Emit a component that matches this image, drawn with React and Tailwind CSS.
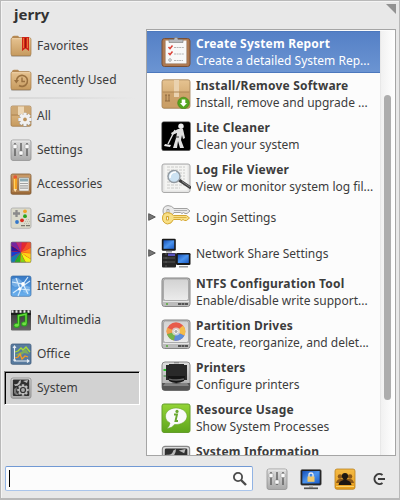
import React from "react";

function Defs() {
  return (
    <svg className="absolute h-0 w-0">
      <defs>
        <linearGradient id="tan" x1="0" y1="0" x2="0" y2="1"><stop offset="0" stopColor="#e6c391" /><stop offset="1" stopColor="#c69a5e" /></linearGradient>
        <linearGradient id="silver" x1="0" y1="0" x2="0" y2="1"><stop offset="0" stopColor="#dedede" /><stop offset="1" stopColor="#a9a9a9" /></linearGradient>
        <linearGradient id="disk" x1="0" y1="0" x2="0" y2="1"><stop offset="0" stopColor="#d2d2d2" /><stop offset="1" stopColor="#ececec" /></linearGradient>
        <linearGradient id="wood" x1="0" y1="0" x2="0" y2="1"><stop offset="0" stopColor="#c99a68" /><stop offset="1" stopColor="#9a6836" /></linearGradient>
        <linearGradient id="sky" x1="0" y1="0" x2="0" y2="1"><stop offset="0" stopColor="#3577c4" /><stop offset="1" stopColor="#6bb2f0" /></linearGradient>
        <linearGradient id="coal" x1="0" y1="0" x2="0" y2="1"><stop offset="0" stopColor="#333" /><stop offset="1" stopColor="#666" /></linearGradient>
        <linearGradient id="lime" x1="0" y1="0" x2="0" y2="1"><stop offset="0" stopColor="#93d436" /><stop offset="1" stopColor="#5fa51c" /></linearGradient>
        <linearGradient id="screen" x1="0" y1="0" x2="1" y2="1"><stop offset="0" stopColor="#1650b8" /><stop offset="0.5" stopColor="#4b94ee" /><stop offset="1" stopColor="#1b5cc8" /></linearGradient>
        <linearGradient id="amber" x1="0" y1="0" x2="0" y2="1"><stop offset="0" stopColor="#f5bb45" /><stop offset="1" stopColor="#e79d1c" /></linearGradient>
      </defs>
    </svg>
  );
}

const Small = ({ children }) => (
  <svg viewBox="0 0 22 22" className="block h-[22px] w-[22px] shrink-0">{children}</svg>
);
const Large = ({ children }) => (
  <svg viewBox="0 0 30 30" className="block h-[30px] w-[30px] shrink-0">{children}</svg>
);

function Folder({ children }) {
  return (
    <Small>
      <path d="M2 3Q2 .8 4 .8H8L9.500 2.500H19V8H2Z" fill="#b78a53" />
      <rect x="1" y="20" width="20" height="1.500" rx=".7" fill="#777" opacity=".7" />
      <rect x="1" y="2.700" width="20" height="18" rx="1.800" fill="url(#tan)" stroke="#a67c48" strokeWidth=".7" />
      <path d="M2 3.700H20" stroke="#f1d8b1" strokeWidth=".8" />
      {children}
    </Small>
  );
}
const Favorites = () => (
  <Folder>
    <path d="M12 2H19V16L15.500 13.500L12 16Z" fill="#cf2418" />
    <path d="M13.500 3V13M17.500 3V13" stroke="#f07a35" strokeWidth=".9" />
    <path d="M15.500 3V13" stroke="#8f1008" strokeWidth=".8" />
  </Folder>
);
const Recent = () => (
  <Folder>
    <path d="M6.500 12A5.500 5.500 0 1 1 9 16.500" fill="none" stroke="#9a7140" strokeWidth="1.600" />
    <path d="M4 11H9L6.300 14.500Z" fill="#9a7140" />
    <path d="M12 8.500V12.500H15" fill="none" stroke="#9a7140" strokeWidth="1.400" />
  </Folder>
);

const gearTeeth = [0, 45, 90, 135, 180, 225, 270, 315];
function Gear({ x, y, r, fill, hole }) {
  return (
    <g transform={`translate(${x} ${y})`}>
      {gearTeeth.map((a) => <rect key={a} x={-r * 0.23} y={-r} width={r * 0.46} height={r} rx=".5" transform={`rotate(${a})`} fill={fill} />)}
      <circle r={r * 0.72} fill={fill} /><circle r={r * 0.28} fill={hole} />
    </g>
  );
}
const All = () => (
  <Small>
    <rect x="1" y="1" width="20" height="20.300" rx="1.500" fill="url(#tan)" stroke="#9c7444" strokeWidth=".7" />
    <path d="M1.500 10H20.500" stroke="#a57b49" />
    <path d="M8 1.500H14V10H8Z" fill="#edd7b5" /><path d="M2 2H8V9H2ZM14 2H20V9H14Z" fill="#cda875" />
    <Gear x="15" y="14.700" r="7" fill="#999" hole="#bd935b" />
    <Gear x="15" y="14.400" r="6.600" fill="#f1f1f1" hole="#bd935b" />
  </Small>
);
const Sliders = () => (
  <Small>
    <rect x="1" y="1" width="20" height="20.500" rx="2" fill="url(#silver)" stroke="#939393" strokeWidth=".8" />
    <path d="M2 2H20" stroke="#f5f5f5" strokeWidth=".7" />
    <path d="M5 4V17M11 4V17M17 4V17" stroke="#555" strokeWidth="1.300" />
    <g fill="#fafafa" stroke="#777" strokeWidth=".4"><rect x="3" y="5.500" width="4" height="4" rx=".7" /><rect x="9" y="12" width="4" height="4" rx=".7" /><rect x="15" y="5.500" width="4" height="4" rx=".7" /></g>
  </Small>
);
const Accessories = () => (
  <Small>
    <rect x="1" y="1" width="20" height="20.300" rx="1.500" fill="url(#wood)" stroke="#805a34" strokeWidth=".8" />
    <path d="M2 4H20M2 18H20" stroke="#d8ad79" strokeWidth=".6" />
    <path d="M3.500 4H7V16L5.200 19L3.500 16Z" fill="#f5a324" /><path d="M3.500 5.500V3Q5.200 1.500 7 3V5.500Z" fill="#e45735" /><path d="M3.500 16L5.200 19L7 16Z" fill="#f8dfb4" /><path d="M4.500 6V16" stroke="#ffd264" />
    <rect x="9" y="4.500" width="10" height="13.500" rx=".8" fill="#f0f0ed" stroke="#80715d" strokeWidth=".5" />
    <rect x="10" y="5.500" width="8" height="3" fill="#8daab2" />
    <path d="M10.500 10.500H18M10.500 12.800H18M10.500 15.100H18" stroke="#555" strokeWidth="1.200" strokeDasharray="1 1" />
  </Small>
);
const Games = () => (
  <Small>
    <rect x="1" y="1" width="20" height="20.300" rx="1.800" fill="#dbdacb" stroke="#aaa" strokeWidth=".8" />
    <path d="M6.500 3V10M3 6.500H10" stroke="#8b8b8b" strokeWidth="2.300" />
    <circle cx="15" cy="4.300" r="1.900" fill="#eea529" /><circle cx="15" cy="9.200" r="1.900" fill="#28a51e" /><circle cx="12" cy="13.300" r="1.900" fill="#db2a1c" /><circle cx="7" cy="15" r="1.900" fill="#3477ca" />
    <path d="M11 18.700H15M16 18.700H20" stroke="#77776f" strokeWidth="1.300" />
    <path d="M15 14.500H20M16 12.500H20M14 16.500H20" stroke="#b5b4a5" strokeDasharray="1 1" strokeWidth=".8" />
  </Small>
);
const Graphics = () => (
  <Small>
    <svg x="1" y="1" width="20" height="20.500" viewBox="-10 -10 20 20" preserveAspectRatio="none">
      <rect x="-10" y="-10" width="20" height="20" fill="#e22" />
      {["#e22832", "#f2512e", "#ff8c18", "#ffd016", "#f4f414", "#83d713", "#23ad24", "#147bb0", "#183dce", "#301394", "#76259f", "#b72a83"].map((c, i) => (
        <path key={c} d="M0 0Q2 -8 0 -17L9.500 -17Q7 -9 0 0Z" transform={`rotate(${i * 30})`} fill={c} />
      ))}
    </svg>
    <rect x="1" y="1" width="20" height="20.300" rx="1.500" fill="none" stroke="#777" strokeWidth=".7" />
  </Small>
);
const Internet = () => (
  <Small>
    <rect x="1" y="1" width="20" height="20.300" rx="1.800" fill="url(#sky)" stroke="#3b6da5" strokeWidth=".7" />
    <path d="M2 4L8 3L12 6L10 11L5 12L2 10ZM14 10L20 12L18 19L13 17Z" fill="#a9d2f6" opacity=".45" />
    <path d="M2 7L13 9L18 2M13 9L8 21M3 18L20 6M13 9L18 19M6 3L10 14L20 15" fill="none" stroke="#e2f3ff" strokeWidth="1.200" opacity=".9" />
    <circle cx="13" cy="9" r="1.900" fill="#fff" /><circle cx="9.500" cy="14" r="1.500" fill="#fff" />
  </Small>
);
const Multimedia = () => (
  <Small>
    <rect x="1" y="1" width="20" height="20.500" rx="1.300" fill="url(#coal)" />
    <path d="M1.500 2.500H21" stroke="#efefef" strokeWidth="2.300" strokeDasharray="2 2" />
    <path d="M1 5H21" stroke="#151515" strokeWidth="1.500" />
    <path d="M8.500 16V6.800L16 5.200V14.500" fill="none" stroke="#168010" strokeWidth="3" /><ellipse cx="6.600" cy="16.400" rx="3.100" ry="2.500" fill="#2ba71e" /><ellipse cx="14.200" cy="15" rx="3.100" ry="2.500" fill="#2ba71e" />
    <path d="M8.500 16V6.800L16 5.200V14.500" fill="none" stroke="#65dc38" strokeWidth="1.500" /><ellipse cx="6.600" cy="16.200" rx="2" ry="1.500" fill="#73df45" /><ellipse cx="14.200" cy="14.800" rx="2" ry="1.500" fill="#73df45" />
  </Small>
);
const Office = () => (
  <Small>
    <rect x="1" y="1" width="20" height="20.300" rx="1.500" fill="#587b9f" stroke="#405c7b" strokeWidth=".8" />
    <path d="M5 9L8 8L11 5L13 7L16 4L20 9" stroke="#a9db35" strokeWidth="1.300" fill="none" />
    <path d="M5 12L9 10L13 8L16 6L19 11L14 10L10 13Z" fill="#8bbd42" opacity=".75" />
    <path d="M5 15L8 14L10 11L12 16L15 13L18 14" stroke="#f69c20" strokeWidth="1.300" fill="none" />
    <path d="M4.500 3V18H19M3 5L4.500 3L6 5M17 16.500L19 18L17 19.500M3 17H6" fill="none" stroke="#e7edf3" strokeWidth="1.100" />
  </Small>
);
const SystemArt = () => (
  <>
    <rect x="1" y="1" width="20" height="20.300" rx="2" fill="url(#silver)" stroke="#888" strokeWidth=".8" />
    <rect x="2.800" y="2.500" width="16.500" height="16.500" rx="1" fill="#303030" />
    <Gear x="13" y="13" r="5.700" fill="#bababa" hole="#303030" /><circle cx="13" cy="13" r="3.100" fill="#303030" /><circle cx="13" cy="13" r="1.900" fill="#aaa" />
    <path d="M4 7Q8 8 9 4L11 3Q11 9 5 9ZM13 4L18 3L17 6Z" fill="#b8b8b8" />
    <path d="M4 12L7 10L6 15L9 18H6L4 16Z" fill="#777" />
  </>
);
const SystemIcon = () => <Small><SystemArt /></Small>;

const Report = () => (
  <Large>
    <rect x="1" y="1.500" width="28" height="28" rx="2.500" fill="#ad7951" stroke="#785038" />
    <rect x="4" y="4" width="22" height="23" fill="#8d6748" />
    <rect x="4.500" y="3.500" width="21" height="23" fill="#f8f8f8" />
    <path d="M8 4V2.500H13Q13 .2 15 .2Q17 .2 17 2.500H22V5.500H8Z" fill="#b7b9bd" stroke="#777" strokeWidth=".6" />
    <path d="M7.500 10L9 11.700L11.500 8.500M7.500 16L9 17.700L11.500 14.500" fill="none" stroke="#da4036" strokeWidth="1.500" />
    <circle cx="9" cy="23" r="1.300" fill="none" stroke="#888" strokeWidth=".7" />
    <path d="M13 10.500H23M13 17H23M13 23.500H22" stroke="#b4b4b4" strokeDasharray="2 .6" />
  </Large>
);
const Install = () => (
  <Large>
    <rect x="1" y=".8" width="28" height="28.500" rx="2" fill="url(#tan)" stroke="#9e7d55" strokeWidth=".8" />
    <path d="M1.500 13H28.500V28H1.500Z" fill="#c99f68" opacity=".75" /><path d="M13 1H18V18H13Z" fill="#ead2af" />
    <path d="M1.500 13H28.500" stroke="#ae8653" />
    <path d="M5 16V22M8 16V22M4 16H6M7 16H9M4 22H9" stroke="#865f37" strokeWidth=".8" />
    <circle cx="22.500" cy="24" r="5.800" fill="#55a51e" stroke="#3e8114" strokeWidth=".6" /><path d="M20.700 20.500H24.300V24H26L22.500 27.700L19 24H20.700Z" fill="#fff" />
  </Large>
);
const Cleaner = () => (
  <Large>
    <rect x=".7" y=".7" width="28.800" height="29" rx="2" fill="#000" stroke="#777" strokeWidth=".6" />
    <circle cx="20" cy="5.200" r="2.700" fill="#eee" />
    <path d="M17 8L22 8L24 17L22 18L21 14L20 19L23 27H19L17 20L16 27H12L15 17L16 12L11 14L10 12Z" fill="#e0e0e0" />
    <path d="M14 9L7 23" stroke="#ddd" strokeWidth="1.400" /><path d="M4 23L10 24L9 26L3 25Z" fill="#eee" />
    <path d="M14 16H18" stroke="#333" />
  </Large>
);
const Log = () => (
  <Large>
    <rect x="1" y="1" width="28" height="28.500" rx="2" fill="#e5e5e4" stroke="#aaa" />
    <rect x="3.500" y="2" width="23" height="25.500" fill="#f4f4f2" />
    <path d="M6 4H24M6 7H24M6 10H24M6 13H24M6 16H24M6 19H22M6 22H24M6 25H19" stroke="#c1c1bf" strokeWidth=".8" strokeDasharray="3 1" />
    <path d="M18 17L30 25" stroke="#3e3e3e" strokeWidth="3" /><path d="M21 18.500L29 24" stroke="#8a8a8a" strokeWidth=".9" />
    <circle cx="13" cy="13.500" r="6" fill="#cce2f2" stroke="#929aa1" strokeWidth="1.400" /><path d="M9 15Q9 9 15 9" fill="none" stroke="#fff" strokeWidth="1.500" />
  </Large>
);
function Key({ fill, stroke, transform }) {
  return (
    <g transform={transform}>
      <path d="M12 3.500H25L28 6L25 8.500H23L21.500 7.500L20 8.500L18.500 7.500H12Q10 12 6 12Q1 11 1 6Q1 1 6 .6Q10 .7 12 3.500ZM5 4.500V8H7V4.500Z" fill={fill} fillRule="evenodd" stroke={stroke} />
      <path d="M12 5.500H25" stroke={stroke} strokeWidth=".8" />
    </g>
  );
}
const Keys = () => (
  <Large>
    <Key fill="#eaeaea" stroke="#a1a1a1" transform="translate(1 3)" />
    <Key fill="#f7df86" stroke="#d5a731" transform="translate(.5 10)" />
  </Large>
);
const Network = () => (
  <Large>
    <rect x="1" y="15" width="14" height="14.500" rx="1" fill="#262626" /><rect x="7" y="15.500" width="7" height="2.500" fill="#5953bd" /><path d="M2 20H14M2 24H14" stroke="#555" /><path d="M5 15V29" stroke="#5b5b5b" strokeDasharray="2 2" />
    <rect x=".8" y=".8" width="14" height="12" rx="1.300" fill="#191919" /><rect x="2.500" y="2.300" width="10.700" height="8.500" fill="url(#screen)" />
    <path d="M5 13H11V14.500H5Z" fill="#999" />
    <rect x="15" y="15" width="14.500" height="12" rx="1.300" fill="#191919" /><rect x="16.800" y="16.500" width="11" height="8.500" fill="url(#screen)" /><path d="M18 28H27V29.500H18Z" fill="#999" />
  </Large>
);
const DiskArt = () => (
  <>
    <rect x="1" y="1" width="28" height="28.500" rx="2.500" fill="#bdbdbd" stroke="#858585" />
    <rect x="2.500" y="2" width="25" height="21.500" rx="2" fill="url(#disk)" stroke="#999" strokeWidth=".7" />
    <path d="M1.700 24H28.300V27.500Q28 29 26 29H4Q2 29 1.700 27Z" fill="#bcbcbc" /><path d="M2 24.500H28" stroke="#e7e7e7" />
    <circle cx="6" cy="27" r="1" fill="#54a937" /><path d="M17 27H27" stroke="#555" strokeWidth="1.800" strokeDasharray="3 .5" />
  </>
);
const Disk = () => <Large><DiskArt /></Large>;
const Partition = () => (
  <Large>
    <DiskArt />
    <circle cx="15" cy="12.500" r="9.300" fill="#e75b4b" />
    <path d="M15 12.500L6 15A9.300 9.300 0 0 0 13 21.500Z" fill="#74b54b" /><path d="M15 12.500L13 21.500A9.300 9.300 0 0 0 23.500 16.500Z" fill="#5c8edb" />
    <path d="M15 12.500L23.500 16.500A9.300 9.300 0 0 0 22 6.500Z" fill="#f4bd4b" /><path d="M15 12.500L6 8.500A9.300 9.300 0 0 0 6 15Z" fill="#f1a24c" />
    <circle cx="15" cy="12.500" r="4" fill="#ddd" opacity=".8" /><circle cx="15" cy="12.500" r="2" fill="#aaa" stroke="#f6f6f6" />
  </Large>
);
const Printer = () => (
  <Large>
    <rect x="1" y="1" width="28" height="28.500" rx="3" fill="url(#silver)" stroke="#888" />
    <path d="M1 22H29V27Q29 29.500 26 29.500H4Q1 29.500 1 27Z" fill="#555" />
    <path d="M5 4H8V3H23V4H26V19H5Z" fill="#292929" /><path d="M7 15H24L23 20Q15 24 8 20Z" fill="#151515" /><path d="M8 18Q15 20 23 18" fill="none" stroke="#686868" strokeWidth="1.300" />
    <path d="M6 20Q15 26 25 20L28 25H2Z" fill="#aaa" opacity=".55" /><path d="M2.500 9H5" stroke="#28c52d" strokeWidth="2" /><path d="M2.500 15H5" stroke="#78a77c" strokeWidth="2" /><path d="M13 1.800H18" stroke="#777" />
  </Large>
);
const Resource = () => (
  <Large>
    <rect x="1" y="1" width="28" height="28.500" rx="2" fill="url(#lime)" stroke="#649d2d" />
    <path d="M15 5C9 5 4.500 8.700 4.500 13.200C4.500 16 6 18.500 9 20Q8.500 23.500 6 25.500Q11 25 13.500 21.500C20 22 26 18.300 26 13.200C26 8.600 21 5 15 5Z" fill="#fafafa" stroke="#619c27" strokeWidth=".5" />
    <circle cx="16" cy="8.400" r="1.600" fill="#69a72e" /><path d="M13 11.500H16L14.500 18H17" fill="none" stroke="#69a72e" strokeWidth="1.900" />
  </Large>
);
const SystemLarge = () => <Large><g transform="scale(1.364)"><SystemArt /></g></Large>;

const LockScreen = () => (
  <Small>
    <rect x=".7" y="1.500" width="20.600" height="15.800" rx="1.500" fill="#202020" stroke="#666" strokeWidth=".5" /><rect x="2.300" y="3" width="17.400" height="12.500" fill="url(#screen)" />
    <path d="M9 17.500H13V20H9Z" fill="#bbb" /><path d="M4 20.300H18" stroke="#555" strokeWidth="1.700" />
    <path d="M9 9V6.500Q9 5 11 5Q13 5 13 6.500V9" fill="none" stroke="#eee" strokeWidth="1.300" /><rect x="7.500" y="8.500" width="7" height="5.300" fill="#f0c767" />
  </Small>
);
const Users = () => (
  <Small>
    <rect x="1" y="1" width="20" height="20.300" rx="2" fill="url(#amber)" stroke="#b98325" strokeWidth=".8" />
    <g fill="#8a5719"><circle cx="6" cy="8.500" r="2.300" /><circle cx="16" cy="8.500" r="2.300" /><path d="M2 15Q3 11 6 11H16Q19 11 20 15Z" /></g>
    <circle cx="11" cy="8.200" r="3.100" fill="#1d1712" /><path d="M4.500 17Q5 13 9.500 12V10H12.500V12Q17 13 17.500 17Z" fill="#1d1712" />
    <path d="M2 18.500H20" stroke="#f8d26b" />
  </Small>
);

const categories = [
  ["All", All, "tracking-[0px]"],
  ["Settings", Sliders, "tracking-[0px]"],
  ["Accessories", Accessories, "tracking-[0px]"],
  ["Games", Games, "tracking-[0px]"],
  ["Graphics", Graphics, "tracking-[0px]"],
  ["Internet", Internet, "tracking-[0px]"],
  ["Multimedia", Multimedia, "tracking-[0px]"],
  ["Office", Office, "tracking-[0px]"],
  ["System", SystemIcon, "tracking-[0px]"],
];

const apps = [
  ["Create System Report", "Create a detailed System Rep...", Report, "tracking-[0.2px]", "tracking-[0px]"],
  ["Install/Remove Software", "Install, remove and upgrade ...", Install, "tracking-[0.2px]", "tracking-[0px]"],
  ["Lite Cleaner", "Clean your system", Cleaner, "tracking-[0.2px]", "tracking-[0px]"],
  ["Log File Viewer", "View or monitor system log fil...", Log, "tracking-[0.2px]", "tracking-[0px]"],
  ["Login Settings", null, Keys, "tracking-[0px]", ""],
  ["Network Share Settings", null, Network, "tracking-[0px]", ""],
  ["NTFS Configuration Tool", "Enable/disable write support...", Disk, "tracking-[0.2px]", "tracking-[0px]"],
  ["Partition Drives", "Create, reorganize, and delet...", Partition, "tracking-[0.2px]", "tracking-[0px]"],
  ["Printers", "Configure printers", Printer, "tracking-[0.2px]", "tracking-[0px]"],
  ["Resource Usage", "Show System Processes", Resource, "tracking-[0.2px]", "tracking-[0px]"],
  ["System Information", "View system information", SystemLarge, "tracking-[0.2px]", "tracking-[0px]"],
];

function Category({ label, icon: Icon, selected, tracking }) {
  return (
    <div className={`flex h-[34px] shrink-0 items-center border pl-[5px] ${selected ? "border-b-white border-l-[#888] border-r-white border-t-[#888] bg-[#d2d2d2] shadow-[inset_1px_1px_0_#000]" : "border-transparent"}`}>
      <Icon />
      <span className={`ml-[5px] whitespace-nowrap leading-4 ${tracking}`}>{label}</span>
    </div>
  );
}

function AppRow({ title, desc, icon: Icon, titleTracking, descTracking, selected }) {
  return (
    <div className={`flex shrink-0 items-center ${desc ? "h-[42px]" : "h-9"} ${selected ? "border-y border-t-[#4c78bd] border-b-[#4c78bd] bg-linear-to-b from-[#5580c6] to-[#6b94d2] text-white" : ""}`}>
      <div className="flex w-[14px] shrink-0 items-center pl-px">
        {!desc && <svg viewBox="0 0 8 8" className="h-2 w-2"><path d="M.7 .7L7.300 4L.7 7.300Z" fill="#777" stroke="#3d3d3d" strokeWidth=".8" /></svg>}
      </div>
      <Icon />
      <div className="ml-[5px] whitespace-nowrap leading-[17px]">
        <div className={`${desc ? "font-bold" : ""} ${titleTracking}`}>{title}</div>
        {desc && <div className={descTracking}>{desc}</div>}
      </div>
    </div>
  );
}

export default function App() {
  return (
    <div className="flex h-[500px] w-[400px] flex-col overflow-hidden border border-b-2 border-[#b9b9b9] bg-[#e8e8e8] font-['Noto_Sans','Open_Sans',sans-serif] text-[12px] text-[#3c3c3c] shadow-[inset_1px_1px_0_#f4f4f4]">
      <Defs />
      <header className="flex h-7 shrink-0 justify-between pl-[13px] pr-[3px]">
        <h1 className="mt-[3px] text-[15px] font-bold leading-5 text-[#333]">jerry</h1>
        <svg viewBox="0 0 10 10" className="mt-[3px] h-[10px] w-[10px]"><path d="M0 0H10V10Z" fill="#929292" /></svg>
      </header>
      <main className="flex h-[428px] shrink-0">
        <nav className="flex w-[145px] shrink-0 flex-col pl-[3px] pr-[6px]">
          <Category label="Favorites" icon={Favorites} tracking="tracking-[0px]" />
          <Category label="Recently Used" icon={Recent} tracking="tracking-[0px]" />
          <div className="mx-[5px] h-[2px] shrink-0 bg-linear-to-r from-[#d8d8d8] via-[#dedede] to-[#e8e8e8]" />
          {categories.map(([label, icon, tracking]) => <Category key={label} label={label} icon={icon} tracking={tracking} selected={label === "System"} />)}
        </nav>
        <section className="flex h-[427px] w-[250px] overflow-hidden border border-[#a5a5a5] bg-[#fcfcfc] pt-px">
          <div className="flex w-[233px] shrink-0 flex-col">
            {apps.map(([title, desc, icon, titleTracking, descTracking], i) => <AppRow key={title} title={title} desc={desc} icon={icon} titleTracking={titleTracking} descTracking={descTracking} selected={i === 0} />)}
          </div>
          <div className="w-[15px] shrink-0 border-l border-[#e8e8e8] bg-linear-to-r from-[#f1f1f1] to-white pl-[3px] pt-16">
            <div className="h-[305px] w-[7px] rounded-full bg-[#adadad]" />
          </div>
        </section>
      </main>
      <footer className="flex h-10 shrink-0 items-center pl-[4px]">
        <div className="mt-[3px] flex h-[25px] w-[248px] items-center justify-between rounded-[2px] border border-x-[#91b3e4] border-b-[#aac5eb] border-t-[#7199d4] bg-[#fcfcfc] pl-[3px] pr-1">
          <div className="h-[17px] w-px bg-black" />
          <svg viewBox="0 0 16 16" className="h-4 w-4"><circle cx="6" cy="6" r="4.100" fill="none" stroke="#4b4b4b" strokeWidth="1.800" /><path d="M9 9L14 14" stroke="#4b4b4b" strokeWidth="2.400" /></svg>
        </div>
        <div className="ml-[13px] mt-[3px] flex items-center gap-3">
          <Sliders /><LockScreen /><Users />
          <svg viewBox="0 0 16 16" className="ml-[3px] h-4 w-4"><path d="M11.500 4A5 5 0 1 0 11.500 12M7 8H14" fill="none" stroke="#3c3c3c" strokeWidth="2" /></svg>
        </div>
      </footer>
    </div>
  );
}
